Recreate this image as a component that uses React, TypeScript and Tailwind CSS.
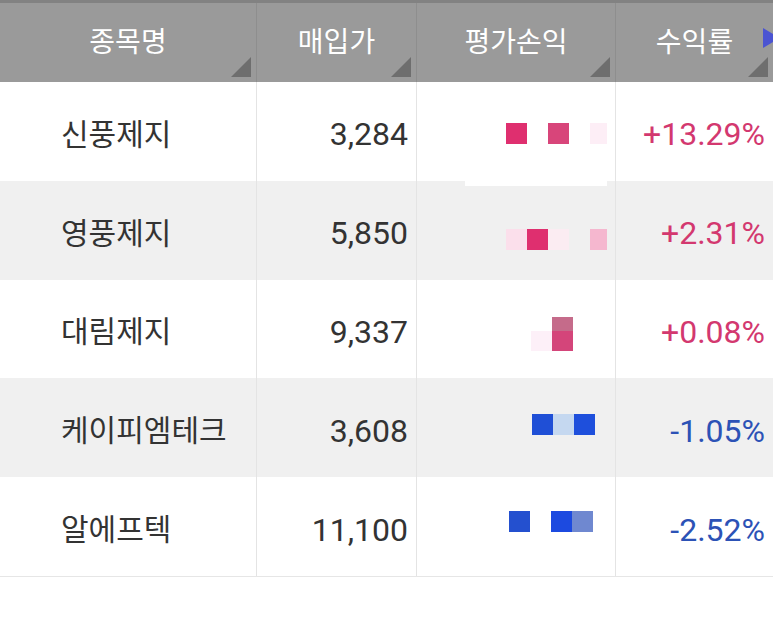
import React from "react";

type Block = { w: number; color: string; top?: string; topH?: number; h?: number };

type Row = {
  name: string;
  price: string;
  rate: string;
  up: boolean;
  blockTop: number;
  blockRight: number;
  blocks: Block[];
  shaded: boolean;
};

const rows: Row[] = [
  {
    name: "신풍제지",
    price: "3,284",
    rate: "+13.29%",
    up: true,
    blockTop: 41,
    blockRight: 8,
    shaded: false,
    blocks: [
      { w: 21, color: "#df2f6f" },
      { w: 21, color: "transparent" },
      { w: 21, color: "#d8457a" },
      { w: 21, color: "transparent" },
      { w: 17, color: "#fdeef6" },
    ],
  },
  {
    name: "영풍제지",
    price: "5,850",
    rate: "+2.31%",
    up: true,
    blockTop: 48,
    blockRight: 8,
    shaded: true,
    blocks: [
      { w: 21, color: "#fbdfeb" },
      { w: 21, color: "#df2f6f" },
      { w: 21, color: "#fbecf2" },
      { w: 21, color: "transparent" },
      { w: 17, color: "#f5b7cf" },
    ],
  },
  {
    name: "대림제지",
    price: "9,337",
    rate: "+0.08%",
    up: true,
    blockTop: 37,
    blockRight: 42,
    shaded: false,
    blocks: [
      { w: 21, color: "#fdf0f8", h: 20, top: "transparent", topH: 14 },
      { w: 21, color: "#d4457a", h: 20, top: "#c56b8a", topH: 14 },
    ],
  },
  {
    name: "케이피엠테크",
    price: "3,608",
    rate: "-1.05%",
    up: false,
    blockTop: 36,
    blockRight: 20,
    shaded: true,
    blocks: [
      { w: 21, color: "#1f4fd6" },
      { w: 21, color: "#c5d8f0" },
      { w: 21, color: "#1e4fdc" },
    ],
  },
  {
    name: "알에프텍",
    price: "11,100",
    rate: "-2.52%",
    up: false,
    blockTop: 34,
    blockRight: 22,
    shaded: false,
    blocks: [
      { w: 21, color: "#2450cf" },
      { w: 21, color: "transparent" },
      { w: 21, color: "#1c4ae0" },
      { w: 21, color: "#6f88d0" },
    ],
  },
];

function HeaderCell({ label, last }: { label: string; last?: boolean }) {
  return (
    <div className={`relative flex items-center justify-center ${last ? "" : "border-r border-[#8e8e8e]"}`}>
      <span className="text-[28px] text-white">{label}</span>
      <div className="absolute right-[5px] bottom-[5px] h-0 w-0 border-l-[20px] border-b-[20px] border-l-transparent border-b-[#6e6e6e]" />
      {last && (
        <svg className="absolute right-[-8px] top-[23px]" width="20" height="24" viewBox="0 0 20 24">
          <polygon points="2,2 19,12 2,22" fill="#4b54d2" />
        </svg>
      )}
    </div>
  );
}

function Blocks({ row }: { row: Row }) {
  return (
    <div className="flex items-end" style={{ marginTop: row.blockTop, marginRight: row.blockRight }}>
      {row.blocks.map((b, i) => (
        <div key={i} className="flex flex-col" style={{ width: b.w }}>
          {b.top && <div style={{ height: b.topH, background: b.top }} />}
          <div style={{ height: b.h ?? 21, background: b.color }} />
        </div>
      ))}
    </div>
  );
}

export default function App() {
  return (
    <div className="h-[631px] w-[773px] overflow-hidden bg-white font-['Roboto','Noto_Sans_CJK_KR',sans-serif]">
      <div className="grid h-[82px] grid-cols-[257px_160px_199px_157px] border-t-[3px] border-[#828282] bg-[#9a9a9a]">
        <HeaderCell label="종목명" />
        <HeaderCell label="매입가" />
        <HeaderCell label="평가손익" />
        <HeaderCell label="수익률" last />
      </div>

      <div className="border-b border-[#e6e6e6]">
        {rows.map((r, i) => (
          <div
            key={r.name}
            className={`grid h-[98.8px] grid-cols-[257px_160px_199px_157px] ${r.shaded ? "bg-[#f0f0f0]" : "bg-white"}`}
          >
            <div className="flex items-center border-r border-[#e4e4e4] pl-[61px] pt-[6px] text-[30px] text-[#333333]">
              {r.name}
            </div>
            <div className="flex items-center justify-end border-r border-[#e4e4e4] pr-[8px] pt-[6px] text-[32px] text-[#333333]">
              {r.price}
            </div>
            <div className="relative flex items-start justify-end border-r border-[#e4e4e4]">
              {i === 0 && (
                <div className="absolute bottom-[-5px] left-[48px] z-10 h-[10px] w-[142px] bg-white" />
              )}
              <Blocks row={r} />
            </div>
            <div
              className={`flex items-center justify-end pr-[8px] pt-[6px] text-[32px] ${r.up ? "text-[#d3386f]" : "text-[#2c52b6]"}`}
            >
              {r.rate}
            </div>
          </div>
        ))}
      </div>
    </div>
  );
}
